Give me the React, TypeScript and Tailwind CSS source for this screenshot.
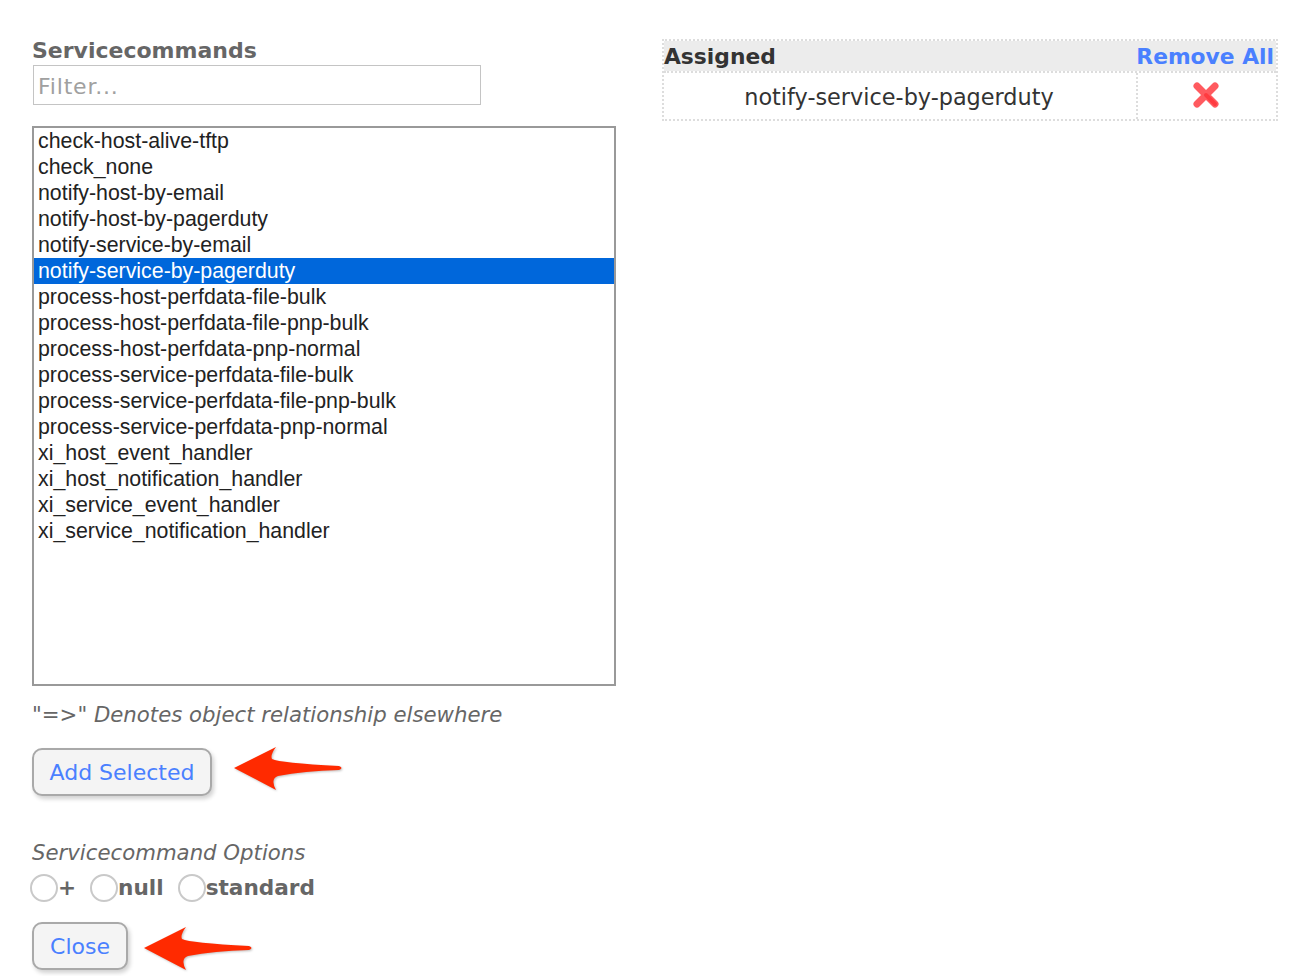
const dejavu = "font-['DejaVu_Sans',sans-serif]";

const commands = [
  "check-host-alive-tftp",
  "check_none",
  "notify-host-by-email",
  "notify-host-by-pagerduty",
  "notify-service-by-email",
  "notify-service-by-pagerduty",
  "process-host-perfdata-file-bulk",
  "process-host-perfdata-file-pnp-bulk",
  "process-host-perfdata-pnp-normal",
  "process-service-perfdata-file-bulk",
  "process-service-perfdata-file-pnp-bulk",
  "process-service-perfdata-pnp-normal",
  "xi_host_event_handler",
  "xi_host_notification_handler",
  "xi_service_event_handler",
  "xi_service_notification_handler",
];

function Arrow({ className }: { className: string }) {
  return (
    <svg width="110" height="46" viewBox="0 0 110 46" className={`drop-shadow-[1px_1px_1px_rgba(0,0,0,0.25)] ${className}`}>
      <path d="M0 22 L42 1 Q36 9 38 13 Q46 17 105 20 Q110 22 105 24 Q70 25 44 30 Q36 33 42 44 Z" fill="#ff2a00" />
    </svg>
  );
}

function Radio({ label }: { label: string }) {
  return (
    <label className="flex items-center">
      <span className="block w-[28px] h-[28px] rounded-full border-2 border-[#c9c9c9] bg-white" />
      <span className="text-[21.6px] leading-[28px] font-bold text-[#666666]">{label}</span>
    </label>
  );
}

function Button({ text, className }: { text: string; className: string }) {
  return (
    <button className={`h-[48px] rounded-[10px] border-2 border-[#a9a9a9] bg-[#f4f4f4] text-[22px] text-[#4a80ff] shadow-[2px_3px_4px_rgba(0,0,0,0.18)] ${className}`}>
      {text}
    </button>
  );
}

export default function App() {
  return (
    <div className={`${dejavu} w-[1302px] h-[976px] overflow-hidden bg-white flex items-start pl-[32px] pt-[36px]`}>
      {/* left column */}
      <div className="w-[584px] shrink-0">
        <h2 className="pt-[1px] h-[28px] text-[22px] leading-[28px] font-bold text-[#666666]">Servicecommands</h2>
        <input
          placeholder="Filter..."
          className="block mt-[1px] ml-[1px] w-[448px] h-[40px] border border-[#c4c4c4] pl-[4px] pt-[2px] text-[22px] tracking-[0.8px] placeholder:text-[#a0a0a0] outline-none"
        />
        <div className="mt-[21px] w-[584px] h-[560px] border-2 border-[#999999] font-['Liberation_Sans',sans-serif] text-[21.33px] leading-[26px] text-[#222222]">
          {commands.map((c) =>
            c === "notify-service-by-pagerduty" ? (
              <div key={c} className="h-[26px] pl-[4px] bg-[#0067db] text-white">{c}</div>
            ) : (
              <div key={c} className="h-[26px] pl-[4px]">{c}</div>
            )
          )}
        </div>
        <p className="mt-[14px] text-[21.25px] leading-[30px] italic text-[#666666]">"=&gt;" Denotes object relationship elsewhere</p>
        <div className="mt-[18px] h-[48px] flex items-start gap-[22px]">
          <Button text="Add Selected" className="w-[180px]" />
          <Arrow className="-mt-[2px]" />
        </div>
        <p className="mt-[42px] text-[21.25px] leading-[30px] italic text-[#666666]">Servicecommand Options</p>
        <div className="mt-[6px] -ml-[2px] flex items-center gap-[14px]">
          <Radio label="+" />
          <Radio label="null" />
          <Radio label="standard" />
        </div>
        <div className="mt-[20px] flex items-start gap-[16px]">
          <Button text="Close" className="w-[96px]" />
          <Arrow className="mt-[4px]" />
        </div>
      </div>

      {/* assigned table */}
      <div className="ml-[46px] mt-[3px] w-[616px] border-2 border-dotted border-[#dddddd]">
        <div className="flex h-[30px] pt-[3px] items-center justify-between bg-[#ececec] pr-[2px] font-bold text-[21.8px]">
          <span className="text-[#333333]">Assigned</span>
          <span className="text-[#4a80ff]">Remove All</span>
        </div>
        <div className="flex h-[48px] border-t-2 border-dotted border-[#dddddd]">
          <div className="flex-1 flex items-center justify-center pt-[3px] pr-[2px] text-[22.36px] text-[#333333]">notify-service-by-pagerduty</div>
          <div className="w-[140px] flex items-center justify-center border-l-2 border-dotted border-[#dddddd]">
            <svg width="30" height="30" viewBox="0 0 30 30" className="-mt-[3px] -ml-[2px] blur-[0.4px]">
              <path d="M6 6 L24 24 M24 6 L6 24" stroke="#ff5a5f" strokeWidth="7" strokeLinecap="round" />
              <path d="M15 15 L24 24" stroke="#ff3b40" strokeWidth="4" strokeLinecap="round" />
            </svg>
          </div>
        </div>
      </div>
    </div>
  );
}
